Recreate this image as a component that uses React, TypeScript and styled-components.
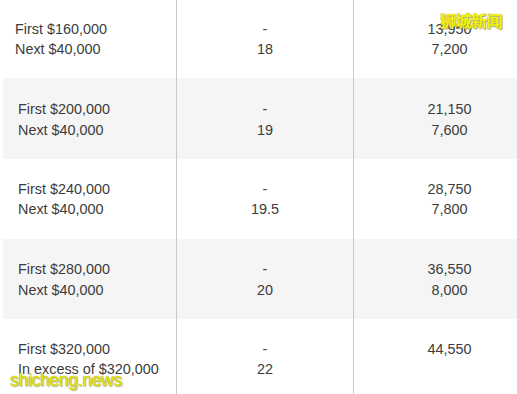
import React from "react";
import styled, { createGlobalStyle } from "styled-components";

const Global = createGlobalStyle`
  html, body { margin: 0; padding: 0; background: #ffffff; overflow: hidden; }
  body { width: 517px; height: 394px; }
`;

const Page = styled.div`
  position: relative;
  width: 517px;
  height: 394px;
  overflow: hidden;
  background: #ffffff;
  font-family: "Liberation Sans", Arial, sans-serif;
`;

const Table = styled.div`
  display: flex;
  flex-direction: column;
  width: 542px;
  margin-left: 3px;
`;

const Row = styled.div<{ $shade: boolean; $h: number }>`
  display: grid;
  grid-template-columns: 174px 177px 191px;
  width: 542px;
  height: ${(p) => p.$h}px;
  background: ${(p) => (p.$shade ? "#f5f5f6" : "#ffffff")};
`;

const Cell = styled.div<{ $align: "left" | "center"; $pad?: number; $last?: boolean; $shift?: number }>`
  display: flex;
  flex-direction: column;
  justify-content: center;
  align-items: ${(p) => (p.$align === "left" ? "flex-start" : "center")};
  padding-left: ${(p) => p.$pad ?? 0}px;
  padding-top: ${(p) => p.$shift ?? 0}px;
  border-right: ${(p) => (p.$last ? "none" : "1px solid #cacaca")};
  color: #3c3c3c;
  font-size: 14.4px;
  line-height: 20.5px;
`;

const Line = styled.span<{ $hidden?: boolean }>`
  display: block;
  white-space: nowrap;
  visibility: ${(p) => (p.$hidden ? "hidden" : "visible")};
`;

const WatermarkCN = styled.div`
  position: absolute;
  left: 440px;
  top: 9px;
  font-family: "Noto Sans CJK SC", sans-serif;
  font-weight: 700;
  font-size: 16px;
  line-height: 22px;
  color: #f5f50a;
  letter-spacing: -0.5px;
  text-shadow: 0 0 1px #8a8a30, 1px 1px 1px rgba(110, 110, 50, 0.6);
`;

const WatermarkEN = styled.div`
  position: absolute;
  left: 10px;
  top: 369px;
  font-family: "Liberation Sans", Arial, sans-serif;
  font-size: 17.5px;
  line-height: 22px;
  letter-spacing: -0.3px;
  color: #e6e60a;
  text-shadow: 0 0 1px #8a8a30, 1px 1px 1px rgba(110, 110, 50, 0.5);
`;

type RowData = {
  labels: [string, string];
  rate: string;
  tax: [string, string];
  shade: boolean;
  h: number;
  pad: number;
  shift: number;
};

const rows: RowData[] = [
  { labels: ["First $160,000", "Next $40,000"], rate: "18", tax: ["13,950", "7,200"], shade: false, h: 78, pad: 12, shift: 0 },
  { labels: ["First $200,000", "Next $40,000"], rate: "19", tax: ["21,150", "7,600"], shade: true, h: 81, pad: 15, shift: 2 },
  { labels: ["First $240,000", "Next $40,000"], rate: "19.5", tax: ["28,750", "7,800"], shade: false, h: 80, pad: 15, shift: 0 },
  { labels: ["First $280,000", "Next $40,000"], rate: "20", tax: ["36,550", "8,000"], shade: true, h: 80, pad: 15, shift: 1 },
  { labels: ["First $320,000", "In excess of $320,000"], rate: "22", tax: ["44,550", ""], shade: false, h: 80, pad: 15, shift: 0 },
];

export default function App() {
  return (
    <>
      <Global />
      <Page>
        <Table>
          {rows.map((r, i) => (
            <Row key={i} $shade={r.shade} $h={r.h}>
              <Cell $align="left" $pad={r.pad} $shift={r.shift}>
                <Line>{r.labels[0]}</Line>
                <Line>{r.labels[1]}</Line>
              </Cell>
              <Cell $align="center" $shift={r.shift}>
                <Line>-</Line>
                <Line>{r.rate}</Line>
              </Cell>
              <Cell $align="center" $last $shift={r.shift}>
                <Line>{r.tax[0]}</Line>
                <Line $hidden={!r.tax[1]}>{r.tax[1] || "0"}</Line>
              </Cell>
            </Row>
          ))}
        </Table>
        <WatermarkCN>狮城新闻</WatermarkCN>
        <WatermarkEN>shicheng.news</WatermarkEN>
      </Page>
    </>
  );
}
